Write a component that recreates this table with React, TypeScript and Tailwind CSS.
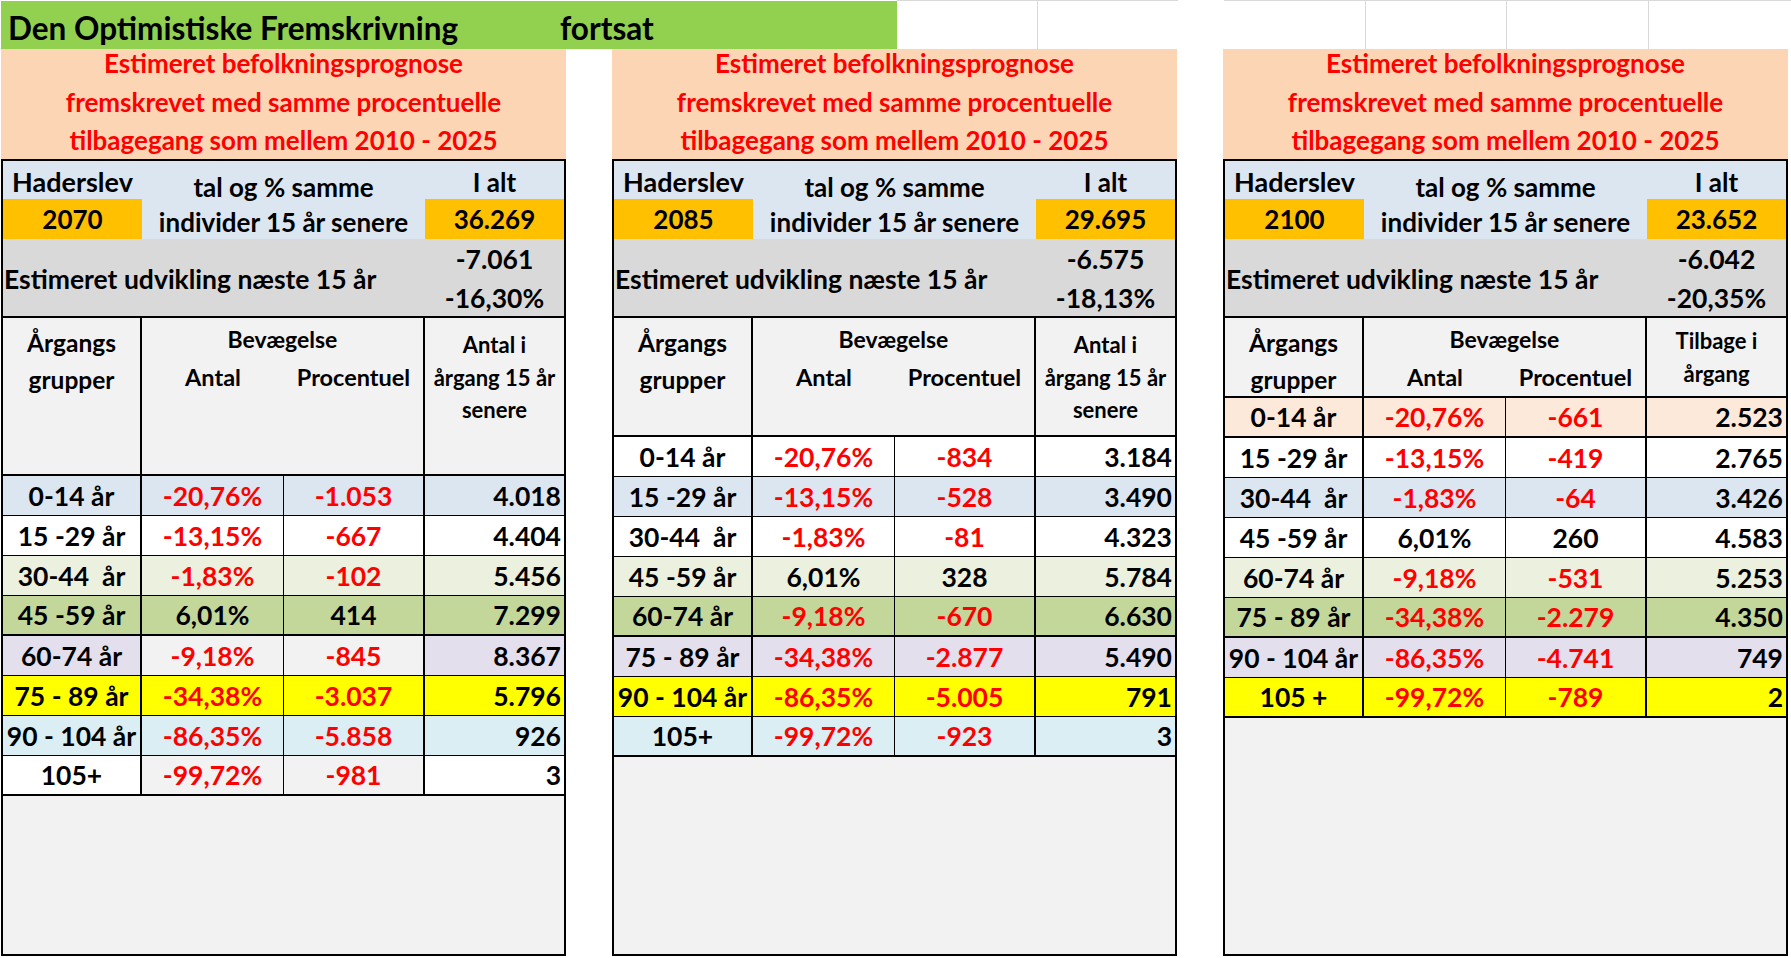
import React from 'react';

type Row = {
  age: string;
  pct: string;
  num: string;
  total: string;
  bg: string;
  mid?: string;
  thick?: boolean;
};

type Panel = {
  year: string;
  total: string;
  diff: string;
  diffPct: string;
  headerH: string;
  lastHead: string[];
  lastHeadPad: string;
  rows: Row[];
};

const panels: Panel[] = [
  {
    year: '2070',
    total: '36.269',
    diff: '-7.061',
    diffPct: '-16,30%',
    headerH: 'h-[158px]',
    lastHead: ['Antal i', 'årgang 15 år', 'senere'],
    lastHeadPad: 'pt-[11px]',
    rows: [
      { age: '0-14 år', pct: '-20,76%', num: '-1.053', total: '4.018', bg: 'bg-[#dce6f1]' },
      { age: '15 -29 år', pct: '-13,15%', num: '-667', total: '4.404', bg: 'bg-white' },
      { age: '30-44  år', pct: '-1,83%', num: '-102', total: '5.456', bg: 'bg-[#ebf1de]' },
      { age: '45 -59 år', pct: '6,01%', num: '414', total: '7.299', bg: 'bg-[#c4d79b]', thick: true },
      { age: '60-74 år', pct: '-9,18%', num: '-845', total: '8.367', bg: 'bg-[#e4dfec]', mid: 'bg-[#f2f2f2]' },
      { age: '75 - 89 år', pct: '-34,38%', num: '-3.037', total: '5.796', bg: 'bg-[#ffff00]' },
      { age: '90 - 104 år', pct: '-86,35%', num: '-5.858', total: '926', bg: 'bg-[#daeef3]' },
      { age: '105+', pct: '-99,72%', num: '-981', total: '3', bg: 'bg-white', mid: 'bg-[#f2f2f2]', thick: true },
    ],
  },
  {
    year: '2085',
    total: '29.695',
    diff: '-6.575',
    diffPct: '-18,13%',
    headerH: 'h-[119px]',
    lastHead: ['Antal i', 'årgang 15 år', 'senere'],
    lastHeadPad: 'pt-[11px]',
    rows: [
      { age: '0-14 år', pct: '-20,76%', num: '-834', total: '3.184', bg: 'bg-white' },
      { age: '15 -29 år', pct: '-13,15%', num: '-528', total: '3.490', bg: 'bg-[#dce6f1]' },
      { age: '30-44  år', pct: '-1,83%', num: '-81', total: '4.323', bg: 'bg-white' },
      { age: '45 -59 år', pct: '6,01%', num: '328', total: '5.784', bg: 'bg-[#ebf1de]' },
      { age: '60-74 år', pct: '-9,18%', num: '-670', total: '6.630', bg: 'bg-[#c4d79b]', thick: true },
      { age: '75 - 89 år', pct: '-34,38%', num: '-2.877', total: '5.490', bg: 'bg-[#e4dfec]' },
      { age: '90 - 104 år', pct: '-86,35%', num: '-5.005', total: '791', bg: 'bg-[#ffff00]' },
      { age: '105+', pct: '-99,72%', num: '-923', total: '3', bg: 'bg-[#daeef3]', thick: true },
    ],
  },
  {
    year: '2100',
    total: '23.652',
    diff: '-6.042',
    diffPct: '-20,35%',
    headerH: 'h-[80px]',
    lastHead: ['Tilbage i', 'årgang'],
    lastHeadPad: 'pt-[7px]',
    rows: [
      { age: '0-14 år', pct: '-20,76%', num: '-661', total: '2.523', bg: 'bg-[#fde9d9]', thick: true },
      { age: '15 -29 år', pct: '-13,15%', num: '-419', total: '2.765', bg: 'bg-white' },
      { age: '30-44  år', pct: '-1,83%', num: '-64', total: '3.426', bg: 'bg-[#dce6f1]' },
      { age: '45 -59 år', pct: '6,01%', num: '260', total: '4.583', bg: 'bg-white' },
      { age: '60-74 år', pct: '-9,18%', num: '-531', total: '5.253', bg: 'bg-[#ebf1de]' },
      { age: '75 - 89 år', pct: '-34,38%', num: '-2.279', total: '4.350', bg: 'bg-[#c4d79b]', thick: true },
      { age: '90 - 104 år', pct: '-86,35%', num: '-4.741', total: '749', bg: 'bg-[#e4dfec]' },
      { age: '105 +', pct: '-99,72%', num: '-789', total: '2', bg: 'bg-[#ffff00]', thick: true },
    ],
  },
];

const red = (v: string) => (v.startsWith('-') ? 'text-[#ff0000]' : 'text-black');

function Cells({ r }: { r: Row }) {
  const mid = r.mid ?? r.bg;
  return (
    <>
      <div className={`${r.bg} flex items-center justify-center whitespace-pre border-r-2 border-black`}>{r.age}</div>
      <div className={`${mid} ${red(r.pct)} flex items-center justify-center border-r border-black`}>{r.pct}</div>
      <div className={`${mid} ${red(r.num)} flex items-center justify-center border-r-2 border-black`}>{r.num}</div>
      <div className={`${r.bg} flex items-center justify-end pr-[3px]`}>{r.total}</div>
    </>
  );
}

function DataRow({ r }: { r: Row }) {
  if (r.thick) {
    return (
      <div className="grid h-[40px] shrink-0 grid-cols-[139px_142px_141px_1fr] border-b-2 border-black text-[26.5px] leading-[30px]">
        <Cells r={r} />
      </div>
    );
  }
  return (
    <div className="grid h-[40px] shrink-0 grid-cols-[139px_142px_141px_1fr] border-b border-black text-[26.5px] leading-[30px]">
      <Cells r={r} />
    </div>
  );
}

function PanelView({ p }: { p: Panel }) {
  return (
    <div className="flex w-[565px] flex-col">
      <div className="flex h-[110px] flex-col items-center justify-center bg-[#fcd5b4] pb-[4px] text-[26px] leading-[38.5px] text-[#ff0000]">
        <div>Estimeret befolkningsprognose</div>
        <div>fremskrevet med samme procentuelle</div>
        <div>tilbagegang som mellem 2010 - 2025</div>
      </div>
      <div className="flex h-[797px] flex-col border-2 border-black text-black">
        <div className="grid shrink-0 grid-cols-[139px_283px_1fr] grid-rows-[38px_40px] bg-[#dce6f1] text-[26px] leading-[30px]">
          <div className="flex items-center justify-center pt-[4px] text-[27px]">Haderslev</div>
          <div className="row-span-2 flex flex-col items-center pt-[9px] leading-[35px]">
            <div>tal og % samme</div>
            <div>individer 15 år senere</div>
          </div>
          <div className="flex items-center justify-center pt-[4px]">I alt</div>
          <div className="flex items-center justify-center bg-[#ffc000]">{p.year}</div>
          <div className="flex items-center justify-center bg-[#ffc000]">{p.total}</div>
        </div>
        <div className="grid h-[79px] shrink-0 grid-cols-[422px_1fr] border-b-2 border-black bg-[#d9d9d9] text-[26.5px] leading-[30px]">
          <div className="flex items-center pl-[1px]">Estimeret udvikling næste 15 år</div>
          <div className="flex flex-col items-center justify-center pt-[1px] leading-[39px]">
            <div>{p.diff}</div>
            <div>{p.diffPct}</div>
          </div>
        </div>
        <div className={`grid ${p.headerH} shrink-0 grid-cols-[139px_283px_1fr] border-b-2 border-black bg-[#f2f2f2] text-[22px]`}>
          <div className="flex flex-col items-center border-r-2 border-black pt-[6px] text-[24.5px] leading-[37px]">
            <div>Årgangs</div>
            <div>grupper</div>
          </div>
          <div className="flex flex-col border-r-2 border-black pt-[2px] leading-[38px]">
            <div className="text-center text-[23px]">Bevægelse</div>
            <div className="grid grid-cols-[142px_1fr] text-[23.5px]">
              <div className="text-center">Antal</div>
              <div className="text-center">Procentuel</div>
            </div>
          </div>
          <div className={`flex flex-col items-center ${p.lastHeadPad} leading-[32.5px]`}>
            {p.lastHead.map((t) => (
              <div key={t}>{t}</div>
            ))}
          </div>
        </div>
        {p.rows.map((r) => (
          <DataRow key={r.age} r={r} />
        ))}
        <div className="flex-1 bg-[#f2f2f2]" />
      </div>
    </div>
  );
}

export default function App() {
  return (
    <div className="h-[958px] w-[1791px] overflow-hidden bg-white font-['Lato',sans-serif] font-bold">
      <div className="flex h-[49px]">
        <div className="ml-px mt-px flex h-[48px] w-[896px] items-center bg-[#92d050] pl-[7px] pt-[6px] text-[31.5px] leading-[40px] text-black">
          <span className="inline-block w-[552px]">Den Optimistiske Fremskrivning</span>
          <span>fortsat</span>
        </div>
        <div className="w-[140px] border-t border-[#d9d9d9]" />
        <div className="w-[141px] border-l border-t border-[#d9d9d9]" />
        <div className="w-[46px]" />
        <div className="w-[141px] border-t border-[#d9d9d9]" />
        <div className="w-[141px] border-l border-t border-[#d9d9d9]" />
        <div className="w-[142px] border-l border-t border-[#d9d9d9]" />
        <div className="flex-1 border-l border-t border-[#d9d9d9]" />
      </div>
      <div className="ml-px flex">
        <PanelView p={panels[0]} />
        <div className="w-[46px]" />
        <PanelView p={panels[1]} />
        <div className="w-[46px]" />
        <PanelView p={panels[2]} />
      </div>
    </div>
  );
}
